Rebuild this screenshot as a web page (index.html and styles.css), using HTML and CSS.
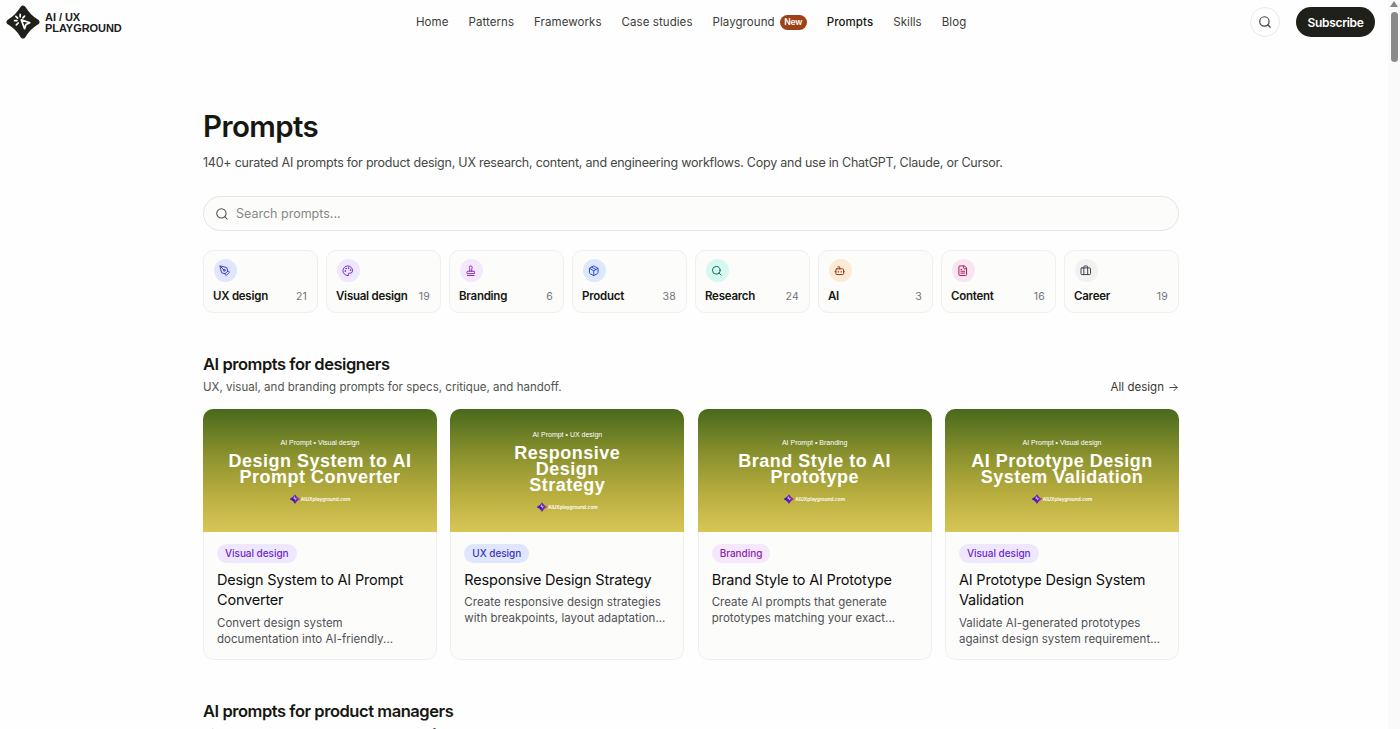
FILE: index.html
```html
<!DOCTYPE html>
<html lang="en">
<head>
<meta charset="utf-8">
<title>Prompts | AI / UX Playground</title>
<link rel="stylesheet" href="styles.css">
</head>
<body>
<svg class="defs" width="0" height="0" aria-hidden="true">
  <defs>
    <linearGradient id="gem" x1="0" y1="0.2" x2="1" y2="0">
      <stop offset="0" stop-color="#2a10c8"/><stop offset="0.55" stop-color="#6a22b8"/><stop offset="1" stop-color="#e04a2c"/>
    </linearGradient>
    <symbol id="mark" viewBox="0 0 24 24">
      <path d="M12 0.3c1 0 1.5.8 2 1.5 2 3.3 4.700 6 8.200 8.200.8.5 1.500 1 1.500 2s-.7 1.500-1.500 2c-3.500 2.200-6.200 4.900-8.200 8.200-.5.7-1 1.500-2 1.500s-1.500-.8-2-1.500c-2-3.300-4.700-6-8.200-8.200-.8-.5-1.500-1-1.500-2s.7-1.500 1.500-2C5.300 7.800 8 5.100 10 1.800c.5-.7 1-1.500 2-1.500z"/>
    </symbol>
    <symbol id="gem-mark" viewBox="0 0 24 24">
      <path d="M12 1.500Q15 8 23.500 12 15 16 12 22.500 9 16 .5 12 9 8 12 1.500z" fill="url(#gem)" stroke="url(#gem)" stroke-width="1.500" stroke-linejoin="round"/>
      <path d="M11 5l2 5 4 1-3 2 1 4-4-5-3-1z" fill="#d3a8ec"/>
    </symbol>
    <symbol id="search" viewBox="0 0 24 24"><circle cx="11" cy="11" r="8"/><path d="m21 21-4.300-4.300"/></symbol>
  </defs>
</svg>
<div class="window">
  <div class="page">
    <header class="topbar">
      <a class="brand">
        <svg class="brand-mark" viewBox="0 0 24 24"><use href="#mark" fill="#20201a"/><g class="brand-cursor"><path d="M10.800 10.500l6 2-2.700 1.300-1 2.900z"/><path d="M10 6.600v1.700M7 8l1.200 1.200M13.100 7.900l-1.200 1.200M6.100 11h1.600M7.300 14l1.300-1.300"/></g></svg>
        <span class="brand-name">AI / UX<br>PLAYGROUND</span>
      </a>
      <nav class="nav">
        <a>Home</a><a>Patterns</a><a>Frameworks</a><a>Case studies</a><a class="with-badge">Playground<span class="new">New</span></a><a class="current">Prompts</a><a>Skills</a><a>Blog</a>
      </nav>
      <div class="actions">
        <button class="round"><svg class="icon" viewBox="0 0 24 24"><use href="#search"/></svg></button>
        <button class="subscribe">Subscribe</button>
      </div>
    </header>
    <main class="content">
      <h1>Prompts</h1>
      <p class="lead">140+ curated AI prompts for product design, UX research, content, and engineering workflows. Copy and use in ChatGPT, Claude, or Cursor.</p>
      <div class="searchbox"><svg class="icon" viewBox="0 0 24 24"><use href="#search"/></svg><span>Search prompts...</span></div>

      <div class="categories">
        <a class="category"><span class="dot indigo"><svg class="icon" viewBox="0 0 24 24"><path d="M15.707 21.293a1 1 0 0 1-1.414 0l-1.586-1.586a1 1 0 0 1 0-1.414l5.586-5.586a1 1 0 0 1 1.414 0l1.586 1.586a1 1 0 0 1 0 1.414z"/><path d="m18 13-1.375-6.874a1 1 0 0 0-.746-.776L3.235 2.028a1 1 0 0 0-1.207 1.207L5.350 15.879a1 1 0 0 0 .776.746L13 18"/><path d="m2.300 2.300 7.286 7.286"/><circle cx="11" cy="11" r="2"/></svg></span><span class="row"><b>UX design</b><i>21</i></span></a>
        <a class="category"><span class="dot violet"><svg class="icon" viewBox="0 0 24 24"><path d="M12 22a10 10 0 1 1 10-10 5 5 0 0 1-5 5h-2.250a1.750 1.750 0 0 0-1.400 2.800l.3.4a1.750 1.750 0 0 1-1.400 2.800z"/><circle cx="13.500" cy="6.500" r=".7"/><circle cx="17.500" cy="10.500" r=".7"/><circle cx="6.500" cy="12.500" r=".7"/><circle cx="8.500" cy="7.500" r=".7"/></svg></span><span class="row"><b>Visual design</b><i>19</i></span></a>
        <a class="category"><span class="dot purple"><svg class="icon" viewBox="0 0 24 24"><path d="M5 22h14"/><path d="M19.270 13.730A2.500 2.500 0 0 0 17.500 13h-11A2.500 2.500 0 0 0 4 15.500V17a1 1 0 0 0 1 1h14a1 1 0 0 0 1-1v-1.500c0-.66-.26-1.300-.73-1.770Z"/><path d="M14 13V8.500C14 7 15 7 15 5a3 3 0 0 0-6 0c0 2 1 2 1 3.500V13"/></svg></span><span class="row"><b>Branding</b><i>6</i></span></a>
        <a class="category"><span class="dot blue"><svg class="icon" viewBox="0 0 24 24"><path d="M11 21.730a2 2 0 0 0 2 0l7-4A2 2 0 0 0 21 16V8a2 2 0 0 0-1-1.730l-7-4a2 2 0 0 0-2 0l-7 4A2 2 0 0 0 3 8v8a2 2 0 0 0 1 1.730z"/><path d="M12 22V12"/><path d="M3.290 7 12 12l8.710-5"/><path d="m7.500 4.270 9 5.150"/></svg></span><span class="row"><b>Product</b><i>38</i></span></a>
        <a class="category"><span class="dot teal"><svg class="icon" viewBox="0 0 24 24"><use href="#search"/></svg></span><span class="row"><b>Research</b><i>24</i></span></a>
        <a class="category"><span class="dot orange"><svg class="icon" viewBox="0 0 24 24"><path d="M12 8V4H8"/><rect width="16" height="12" x="4" y="8" rx="2"/><path d="M2 14h2M20 14h2M15 13v2M9 13v2"/></svg></span><span class="row"><b>AI</b><i>3</i></span></a>
        <a class="category"><span class="dot pink"><svg class="icon" viewBox="0 0 24 24"><path d="M15 2H6a2 2 0 0 0-2 2v16a2 2 0 0 0 2 2h12a2 2 0 0 0 2-2V7Z"/><path d="M14 2v4a2 2 0 0 0 2 2h4M10 9H8M16 13H8M16 17H8"/></svg></span><span class="row"><b>Content</b><i>16</i></span></a>
        <a class="category"><span class="dot gray"><svg class="icon" viewBox="0 0 24 24"><path d="M16 20V4a2 2 0 0 0-2-2h-4a2 2 0 0 0-2 2v16"/><rect width="20" height="14" x="2" y="6" rx="2"/></svg></span><span class="row"><b>Career</b><i>19</i></span></a>
      </div>

      <section class="group">
        <h2>AI prompts for designers</h2>
        <div class="group-sub"><p>UX, visual, and branding prompts for specs, critique, and handoff.</p><a class="more">All design <svg class="icon" viewBox="0 0 24 24"><path d="M4 12h16M13 5l7 7-7 7"/></svg></a></div>
        <div class="cards">
          <article class="card">
            <div class="cover"><small>AI Prompt • Visual design</small><strong>Design System to AI<br>Prompt Converter</strong><span class="site"><svg viewBox="0 0 24 24"><use href="#gem-mark"/></svg>AIUXplayground.com</span></div>
            <div class="info"><span class="tag violet">Visual design</span><h3>Design System to AI Prompt Converter</h3><p>Convert design system<br>documentation into AI-friendly...</p></div>
          </article>
          <article class="card">
            <div class="cover"><small>AI Prompt • UX design</small><strong>Responsive<br>Design<br>Strategy</strong><span class="site"><svg viewBox="0 0 24 24"><use href="#gem-mark"/></svg>AIUXplayground.com</span></div>
            <div class="info"><span class="tag indigo">UX design</span><h3>Responsive Design Strategy</h3><p>Create responsive design strategies<br>with breakpoints, layout adaptation...</p></div>
          </article>
          <article class="card">
            <div class="cover"><small>AI Prompt • Branding</small><strong>Brand Style to AI<br>Prototype</strong><span class="site"><svg viewBox="0 0 24 24"><use href="#gem-mark"/></svg>AIUXplayground.com</span></div>
            <div class="info"><span class="tag purple">Branding</span><h3>Brand Style to AI Prototype</h3><p>Create AI prompts that generate<br>prototypes matching your exact...</p></div>
          </article>
          <article class="card">
            <div class="cover"><small>AI Prompt • Visual design</small><strong>AI Prototype Design<br>System Validation</strong><span class="site"><svg viewBox="0 0 24 24"><use href="#gem-mark"/></svg>AIUXplayground.com</span></div>
            <div class="info"><span class="tag violet">Visual design</span><h3>AI Prototype Design System Validation</h3><p>Validate AI-generated prototypes<br>against design system requirement...</p></div>
          </article>
        </div>
      </section>

      <section class="group">
        <h2>AI prompts for product managers</h2>
        <div class="group-sub"><p>Discovery, stakeholder, and PRD prompts for teams.</p><a class="more">All product <svg class="icon" viewBox="0 0 24 24"><path d="M4 12h16M13 5l7 7-7 7"/></svg></a></div>
      </section>
    </main>
  </div>
  <div class="scrollbar"><span class="arrow"></span><span class="thumb"></span></div>
</div>
</body>
</html>
```
FILE: styles.css
```css
* { box-sizing: border-box; }
body { margin: 0; background: #fefefe; color: #161712; font-family: Inter, "Liberation Sans", sans-serif; }
.defs { display: block; position: absolute; }
h1, h2, h3, p { margin: 0; }
button { font: inherit; border: 0; padding: 0; }
.icon { display: block; fill: none; stroke: currentColor; stroke-width: 2; stroke-linecap: round; stroke-linejoin: round; flex: none; }
.window { display: flex; height: 729px; overflow: hidden; }
.page { flex: 1; }

.topbar { display: grid; grid-template-columns: 416px 1fr auto; height: 44px; align-items: center; padding-right: 13px; }
.brand { display: flex; align-items: center; gap: 5px; padding-left: 6px; }
.brand-mark { width: 34px; height: 34px; display: block; }
.brand-cursor { fill: none; stroke: #fff; stroke-width: 1.2; stroke-linecap: round; stroke-linejoin: round; }
.brand-name { padding-top: 2px; font: 700 11px/11px "Liberation Sans", sans-serif; letter-spacing: -.05px; color: #20201a; }
.nav { display: flex; align-items: center; gap: 20px; font-size: 11.500px; letter-spacing: .07px; color: #3a3d37; font-weight: 400; }
.with-badge { display: flex; align-items: center; gap: 5px; }
.new { background: #9f4116; color: #fff; font-size: 8.500px; font-weight: 600; letter-spacing: -.1px; line-height: 15px; padding: 0 4.500px; border-radius: 8px; }
.current { color: #161712; font-weight: 500; }
.actions { display: flex; align-items: center; gap: 16px; }
.round { display: grid; place-items: center; width: 30px; height: 30px; border: 1px solid #e9e9e9; border-radius: 50%; background: #fefefe; color: #3a3b42; }
.round .icon { width: 14px; height: 14px; }
.subscribe { width: 79px; height: 30px; border-radius: 15px; background: #20201a; color: #fff; font-size: 12px; font-weight: 600; letter-spacing: -.3px; }

.content { width: 976px; margin-left: 203px; padding-top: 62px; }
h1 { font-size: 29.500px; line-height: 40px; font-weight: 600; letter-spacing: -.6px; }
.lead { margin-top: 7px; font-size: 12.500px; line-height: 20px; letter-spacing: -.23px; color: #454843; white-space: nowrap; }
.searchbox { display: flex; align-items: center; gap: 7px; margin-top: 23px; height: 35px; padding-left: 11px; border: 1px solid #e4e6e3; border-radius: 18px; background: #fcfdfb; color: #4d504b; font-size: 12.500px; }
.searchbox .icon { width: 14px; height: 14px; stroke-width: 1.800; }
.searchbox span { color: #858883; }

.categories { display: grid; grid-template-columns: repeat(8, 1fr); gap: 8px; margin-top: 19px; }
.category { display: flex; flex-direction: column; justify-content: space-between; height: 63px; padding: 8px 10px 7px 9px; border: 1px solid #efefed; border-radius: 10px; background: #fcfcfa; }
.dot { display: grid; place-items: center; width: 23px; height: 23px; margin-left: .5px; border-radius: 50%; }
.dot .icon { width: 11.500px; height: 11.500px; }
.row { display: flex; justify-content: space-between; align-items: baseline; line-height: 17px; }
.row b { font-size: 11.500px; font-weight: 600; letter-spacing: -.25px; }
.row i { font-style: normal; font-size: 10.500px; color: #73737a; letter-spacing: .2px; }
.indigo { background: #e0e6fd; color: #3b34bd; }
.violet { background: #efe7fd; color: #6b28cc; }
.purple { background: #f5e8fd; color: #8a24a8; }
.blue { background: #dce8fc; color: #2440c8; }
.teal { background: #d5f9ef; color: #17635c; }
.orange { background: #fcebd5; color: #93340f; }
.pink { background: #f7e6f2; color: #a5144e; }
.gray { background: #f2f2f3; color: #3d3d44; }

.group { margin-top: 39px; }
h2 { font-size: 16.500px; line-height: 24px; font-weight: 600; letter-spacing: -.45px; }
.group-sub { display: flex; justify-content: space-between; align-items: center; margin-top: 2px; font-size: 11.500px; line-height: 18px; letter-spacing: .02px; color: #50534e; }
.more { display: flex; align-items: center; gap: 4px; color: #363934; }
.more .icon { width: 11px; height: 11px; }
.cards { display: grid; grid-template-columns: repeat(4, 1fr); gap: 13.330px; margin-top: 13px; }
.card { display: flex; flex-direction: column; height: 251px; border-radius: 10px; background: #fcfcfa; overflow: hidden; }
.cover { display: flex; flex-direction: column; align-items: center; justify-content: center; height: 123px; flex: none; padding-top: 2px; background: linear-gradient(#48691b, #8f942f 40%, #b9ae40 70%, #d7c656); color: #fff; text-align: center; font-family: "Liberation Sans", sans-serif; }
.cover small { font-size: 7px; line-height: 8px; }
.cover strong { margin-top: 6px; font-size: 18px; line-height: 16.400px; letter-spacing: .5px; }
.site { display: flex; align-items: center; gap: 1px; margin-top: 8.500px; font: 600 4.800px/10px Inter, sans-serif; }
.site svg { width: 10px; height: 10px; }
.info { flex: 1; padding: 11.500px 13px 0; border: 1px solid #efefed; border-top: 0; border-radius: 0 0 10px 10px; }
.tag { display: block; width: fit-content; padding: 0 8px; border-radius: 10px; font-size: 10px; line-height: 19.500px; font-weight: 500; letter-spacing: -.04px; }
h3 { margin-top: 6.500px; font-size: 14.500px; line-height: 20.500px; font-weight: 400; letter-spacing: -.2px; color: #0e0e0e; }
.info p { margin-top: 4px; font-size: 11.500px; line-height: 16.200px; letter-spacing: .03px; color: #4f5056; white-space: nowrap; }

.scrollbar { display: flex; flex-direction: column; align-items: center; width: 12px; padding-top: 1px; background: #fafafa; }
.arrow { width: 0; height: 0; border: 4px solid transparent; border-top: 0; border-bottom: 6px solid #858585; }
.thumb { width: 7px; height: 50px; margin-top: 5px; border-radius: 4px; background: #8a8a8a; }
```
